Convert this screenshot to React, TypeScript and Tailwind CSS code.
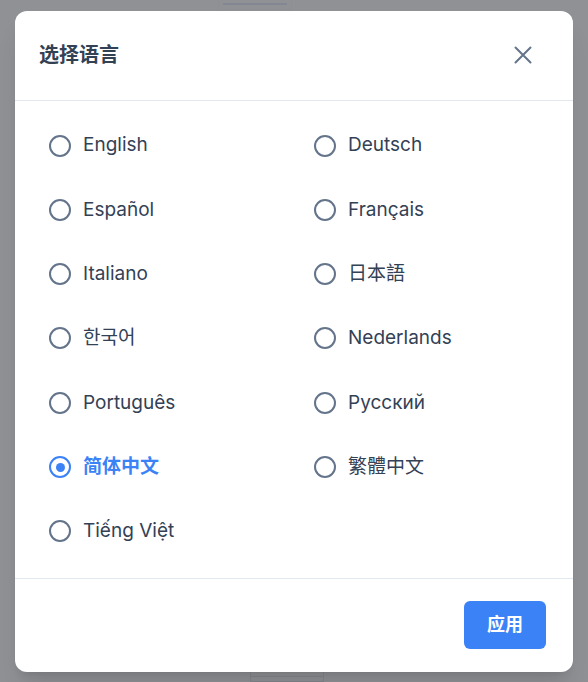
import React, { useState } from 'react';

const LANGUAGES = [
  'English',
  'Deutsch',
  'Español',
  'Français',
  'Italiano',
  '日本語',
  '한국어',
  'Nederlands',
  'Português',
  'Русский',
  '简体中文',
  '繁體中文',
  'Tiếng Việt',
];

const FONT = { fontFamily: 'Inter, "Noto Sans CJK SC", "Noto Sans CJK KR", sans-serif' };

export default function App() {
  const [selected, setSelected] = useState('简体中文');

  return (
    <div className="relative w-[588px] h-[682px] overflow-hidden bg-[#f3f4f6]" style={FONT}>
      {/* page behind the overlay */}
      <div className="absolute left-[218px] top-[-20px] w-[74px] h-[30px] bg-white border border-gray-300">
        <div className="absolute left-1 right-1 bottom-[4px] h-[2px] bg-blue-700" />
      </div>
      <div className="absolute left-[250px] top-[668px] w-[74px] h-[30px] bg-white border-x border-gray-800">
        <div className="mt-[2px] ml-[10px] w-[20px] h-[2px] bg-black" />
        <div className="mt-[4px] h-px bg-gray-800" />
        <div className="mt-[4px] h-px bg-gray-800" />
      </div>

      <div className="absolute inset-0 bg-[#898b8f]/95 flex items-center justify-center">
        <div className="w-[558px] h-[661px] bg-white rounded-xl shadow-xl flex flex-col overflow-hidden">
          <div className="flex items-center justify-between pl-6 pr-[41px] h-[90px] border-b border-[#e2e8f0]">
            <h2 className="text-xl font-bold text-[#334155]">选择语言</h2>
            <button className="text-[#64748b]">
              <svg width="18" height="18" viewBox="0 0 18 18" fill="none" stroke="currentColor" strokeWidth="2" strokeLinecap="round">
                <path d="M1.5 1.5 16.5 16.5M16.5 1.5 1.5 16.5" />
              </svg>
            </button>
          </div>

          <div className="flex-1 px-6 pt-[21px]">
            <div className="grid grid-cols-2 gap-x-5 gap-y-[16.33px]">
              {LANGUAGES.map((lang) => {
                const active = lang === selected;
                return (
                  <button
                    key={lang}
                    onClick={() => setSelected(lang)}
                    className="flex items-center gap-3 h-12 px-2.5 text-left"
                  >
                    <span
                      className={`w-[22px] h-[22px] rounded-full border-[2.5px] flex items-center justify-center ${active ? 'border-[#3b82f6]' : 'border-[#64748b]'}`}
                    >
                      {active && <span className="w-[9px] h-[9px] rounded-full bg-[#3b82f6]" />}
                    </span>
                    <span className={`text-[19px] ${active ? 'text-[#3b82f6] font-semibold' : 'text-[#334155]'}`}>{lang}</span>
                  </button>
                );
              })}
            </div>
          </div>

          <div className="border-t border-[#e2e8f0] flex justify-end items-center pr-[27px] h-[94px]">
            <button className="w-[82px] h-12 rounded-md bg-[#3b82f6] text-white text-lg font-bold">应用</button>
          </div>
        </div>
      </div>
    </div>
  );
}
